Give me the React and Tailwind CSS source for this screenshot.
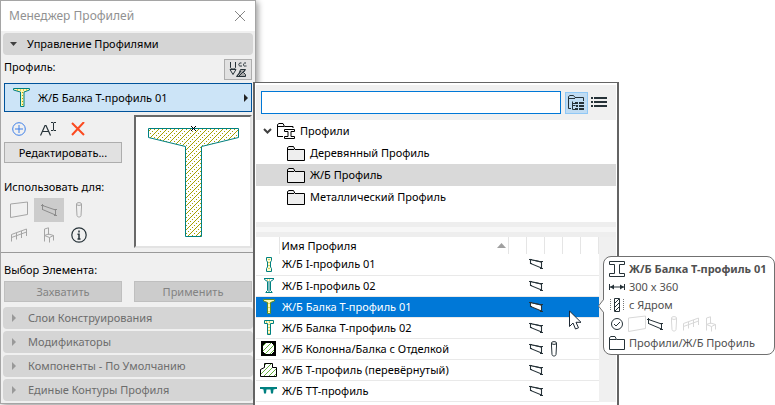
import React from "react";

const Icon = ({ w, h, className = "", children, ...rest }) => (
  <svg
    width={w}
    height={h}
    viewBox={`0 0 ${w} ${h}`}
    fill="none"
    stroke="currentColor"
    aria-hidden="true"
    className={`shrink-0 ${className}`}
    {...rest}
  >
    {children}
  </svg>
);

const Wall = () => (
  <Icon w={18} h={18}>
    <path d="M.5 3 17.5 1v12.5L.5 16.5z" />
  </Icon>
);

const Beam = ({ fill = "none" }) => (
  <Icon w={16} h={14}>
    <path d="M1.500 2.500 14.500 7v5L1.500 6.500z" fill={fill} />
    <path d="M0 2.500h3M1.500 1v6M13 6.500h3M13 12.500h3M14.500 6v7" />
  </Icon>
);

const SmallBeam = ({ fill = "none" }) => (
  <Icon w={14} h={12} strokeWidth="1.100">
    <path d="M1.500 1.500 12.500 4v6L1.500 5.500z" fill={fill} />
    <path d="M0 1.500h3M11 3.500h3M11 10.500h3M1 5.500h2M2 1.500l10 2.500" />
  </Icon>
);

const Column = () => (
  <Icon w={6} h={16}>
    <ellipse cx="3" cy="2" rx="2.500" ry="1.400" />
    <path d="M.5 2v3l.5 8.500c0 2 4 2 4 0L5.500 5V2" />
  </Icon>
);

const Railing = () => (
  <Icon w={16} h={14}>
    <path d="M.5 13.500V6.500L15.500 1v7M.5 9.500l15-5.500M5.500 11.500V5M10.500 10V3" />
  </Icon>
);

const Chair = () => (
  <Icon w={12} h={16}>
    <path d="M1.500 14.500V2L5.500.8v7M1.500 8.500l4-1.500 5 1.500-4 2zM6.500 10.500v5M10.500 8.500v5" />
  </Icon>
);

const Folder = ({ fill = "#eeeeee" }) => (
  <Icon w={18} h={15}>
    <path d="M.5 14.500V1.500L2 .5h4.500L8 3.500h9.500v11z" fill={fill} />
    <path d="M.5 3.500H7" />
  </Icon>
);

const RootFolder = () => (
  <Icon w={18} h={16}>
    <path d="M6 13.500H.5V1.500L2 .5h4L7.500 3.500h8.500V5M.5 3.500H7" />
    <path d="M7.500 6.500h10v2h-3.500v5h3.500v2h-10v-2H11v-5H7.500z" fill="#fff" />
  </Icon>
);

const TreeFolder = () => (
  <Icon w={17} h={16}>
    <path d="M3 13.500H.5V1.500L2 .5h3.500L7 2.500h8.500V6M.5 3.500H7" />
    <path d="M4.500 6.500v8M4.500 10.500h3M4.500 14.500h3M4.500 8.500h3" />
    <path d="M7 8h3M11 8h5M8 11h2M11 11h5M7 14h3M11 14h5" strokeWidth="2" />
  </Icon>
);

const ListIcon = () => (
  <Icon w={16} h={11} strokeWidth="2">
    <path d="M0 1h2M3 1h13M0 5h2M3 5h13M0 9h2M3 9h13" />
  </Icon>
);

const HatchDefs = () => (
  <svg width="0" height="0" className="absolute" aria-hidden="true">
    <defs>
      <pattern id="hatch" width="8" height="8" patternUnits="userSpaceOnUse">
        <path
          d="M0 7h1v1H0zM1 6h1v1H1zM2 5h1v1H2zM3 4h1v1H3zM4 3h1v1H4zM5 2h1v1H5zM6 1h1v1H6zM7 0h1v1H7z"
          fill="#a5a000"
          shapeRendering="crispEdges"
        />
        <path
          d="M4 7h1v1H4zM6 5h1v1H6zM0 3h1v1H0zM2 1h1v1H2z"
          fill="#a5a000"
          shapeRendering="crispEdges"
        />
      </pattern>
      <pattern id="green" width="5" height="5" patternUnits="userSpaceOnUse">
        <path d="M-1 6 6-1" stroke="#65b13e" strokeWidth="1" />
      </pattern>
    </defs>
  </svg>
);

const shapes = {
  i1: (
    <g stroke="#008080">
      <path d="M7.500 1.500h5v3l-1 1.500v5l1 1.500v3h-5v-3l1-1.500V6l-1-1.500z" fill="#fffbd0" />
      <path d="M10 3v12" stroke="#a5a000" strokeDasharray="1 2" />
    </g>
  ),
  i2: (
    <g stroke="#008080">
      <path d="M5 1.500h10M7 15.500h6M5.500 1.500v1l3 2v9l-2 2M14.500 1.500v1l-3 2v9l2 2" />
      <path d="M10 4v11" />
      <path d="M8 3h4" stroke="#d0b800" strokeDasharray="1 1" />
    </g>
  ),
  t1: (
    <g stroke="#5f8d25">
      <path d="M4.500 1.500h11V3l-4 1.500v11h-3v-11l-4-1.500z" fill="#fff9b8" />
      <path d="M10 5v10" stroke="#d0b800" strokeDasharray="1 3" />
    </g>
  ),
  t2: (
    <g stroke="#008080">
      <path d="M5.500 1.500h9v3h-3v11h-3v-11h-3z" fill="#fffbd0" />
      <path d="M7 3h6M10 5v10" stroke="#a5a000" strokeDasharray="1 2" />
    </g>
  ),
  col: (
    <g>
      <path d="M3 2h13v13H3z" fill="#fff" stroke="#000" strokeWidth="2" />
      <path d="M4 3h11v11H4z" fill="url(#green)" stroke="none" />
      <path d="M4 3h2v1H5v1H4zM13 3h2v2h-1V4h-1zM4 12h1v1h1v1H4zM14 12h1v2h-2v-1h1z" fill="#000" stroke="none" />
    </g>
  ),
  inv: (
    <path
      d="M5.500 2.500h8v4h4v9h-16v-7l4-2z"
      fill="url(#green)"
      stroke="#000"
    />
  ),
  tt: (
    <path
      d="M1 5h17v2h-1.500l-2 .5-.5 4h-2l-.5-4H7.500l-.5 4H5l-.5-4L3 7H1z"
      fill="#008080"
      stroke="none"
    />
  ),
};

const Shape = ({ kind }) => (
  <Icon w={19} h={17}>
    {shapes[kind]}
  </Icon>
);

const rows = [
  { name: "Ж/Б I-профиль 01", shape: "i1" },
  { name: "Ж/Б I-профиль 02", shape: "i2" },
  { name: "Ж/Б Балка Т-профиль 01", shape: "t1", selected: true },
  { name: "Ж/Б Балка Т-профиль 02", shape: "t2" },
  { name: "Ж/Б Колонна/Балка с Отделкой", shape: "col", column: true },
  { name: "Ж/Б Т-профиль (перевёрнутый)", shape: "inv" },
  { name: "Ж/Б ТТ-профиль", shape: "tt" },
];

const folders = ["Деревянный Профиль", "Ж/Б Профиль", "Металлический Профиль"];

const sections = [
  "Слои Конструирования",
  "Модификаторы",
  "Компоненты - По Умолчанию",
  "Единые Контуры Профиля",
];

function Preview() {
  return (
    <div className="flex flex-1 items-start border-2 border-t-[#696969] border-l-[#696969] border-r-[#e3e3e3] border-b-[#e3e3e3] bg-white pt-[7px] pl-3">
      <Icon w={91} h={114}>
        <path
          d="M.5 4.500h90v9l-37 9v90h-16v-90l-37-9z"
          fill="url(#hatch)"
          stroke="#008080"
        />
        <path d="m43 2 5 5m0-5-5 5" stroke="#000" />
      </Icon>
    </div>
  );
}

function Palette() {
  return (
    <section className="w-64 shrink-0 self-start border border-[#a5a5a5] bg-[#f0f0f0] shadow-[2px_2px_6px_rgba(0,0,0,0.4)]">
      <header className="flex h-[30px] items-center justify-between bg-white pr-2.5 pl-2">
        <h1 className="text-[12px] text-[#919191]">Менеджер Профилей</h1>
        <button aria-label="Закрыть" className="text-[#858585]">
          <Icon w={10} h={10} className="block">
            <path d="m0 0 10 10M10 0 0 10" />
          </Icon>
        </button>
      </header>

      <div className="px-0.5 pt-0.5">
        <button className="flex h-[22px] w-full items-center gap-2.5 rounded bg-[#d5d5d5] pl-[7px]">
          <Icon w={7} h={4} stroke="none" className="text-[#404040]">
            <path d="M0 0h7L3.500 4z" fill="currentColor" />
          </Icon>
          Управление Профилями
        </button>
      </div>

      <div className="px-[3px]">
        <div className="flex h-7 items-center justify-between">
          <span className="pb-1">Профиль:</span>
          <button
            aria-label="Атрибуты профиля"
            className="flex h-[21px] w-7 items-center justify-center border border-[#adadad] bg-[#e1e1e1] text-[#263238]"
          >
            <Icon w={18} h={17}>
              <path d="M1.500 1v5.500c0 2 5 2 5 0V1M1 8.500h6l-3 5z" />
              <path d="M12.500 2C9 1 9 6 12 5h1M17 2c-3-1-3.500 4-.5 3h1" />
              <path d="M7.500 15.500h9v-2l-2-2 2-3h-5l-1.500 4z" fill="#aaa" />
              <path d="m10 15 6-6M8 15l4-5" />
            </Icon>
          </button>
        </div>

        <button className="flex h-[29px] w-full items-center border border-[#00539b] bg-[#cce4f7] pr-[3px] pl-2">
          <Icon w={18} h={21} stroke="#008080">
            <path d="M.5 1.500h16v1.500l-5.500 2v14.500H7.500V5L.5 3z" fill="#fff7b0" />
            <path d="M4 3h10M9.500 5v14" stroke="#b5a800" strokeDasharray="1 2" />
          </Icon>
          <span className="ml-[7px] flex-1 text-left">Ж/Б Балка Т-профиль 01</span>
          <Icon w={4} h={8} stroke="none">
            <path d="M0 0l4 4-4 4z" fill="#222" />
          </Icon>
        </button>

        <div className="flex gap-3 pt-[3px] pb-1">
          <div className="w-[118px]">
            <div className="flex h-[27px] items-center gap-3.5 pl-2">
              <button aria-label="Создать" className="text-[#3d7fe8]">
                <Icon w={14} h={14} className="block">
                  <circle cx="7" cy="7" r="6.300" />
                  <path d="M7 3v8M3 7h8" />
                </Icon>
              </button>
              <button aria-label="Переименовать" className="text-[#263238]">
                <Icon w={17} h={14} className="block">
                  <path d="M.5 13.500 5 3.500h1L10.500 13.500M2.500 9.500h6" strokeWidth="1.200" />
                  <path d="M11 .5h2l.5.5.5-.5h2M11 8.500h2l.5-.5.5.5h2M13.500 1v7" />
                </Icon>
              </button>
              <button aria-label="Удалить" className="text-[#fb4a20]">
                <Icon w={14} h={14} strokeWidth="2" className="block">
                  <path d="m1 1 12 12M13 0 1 13" />
                </Icon>
              </button>
            </div>
            <button className="h-[21px] w-full border border-[#adadad] bg-[#e1e1e1]">
              Редактировать...
            </button>
            <p className="mt-4 mb-[3px]">Использовать для:</p>
            <div className="grid w-[90px] grid-cols-3 text-[#a5a5a5]">
              <button aria-label="Стена" className="flex h-6 items-center justify-center">
                <Wall />
              </button>
              <button
                aria-label="Балка"
                className="flex h-6 items-center justify-center bg-[#cccccc] text-[#8c8c8c]"
              >
                <Beam />
              </button>
              <button aria-label="Колонна" className="flex h-6 items-center justify-center">
                <Column />
              </button>
              <button aria-label="Ограждение" className="flex h-[26px] items-center justify-center">
                <Railing />
              </button>
              <button aria-label="Объект" className="flex h-[26px] items-center justify-center">
                <Chair />
              </button>
              <button
                aria-label="Информация"
                className="flex h-[26px] items-center justify-center text-[#263238]"
              >
                <Icon w={16} h={16}>
                  <circle cx="8" cy="8" r="7.200" strokeWidth="1.200" />
                  <path d="M8 3.500v2M6.500 7.200h1.500V12M6.500 12h3" strokeWidth="1.500" />
                </Icon>
              </button>
            </div>
          </div>
          <Preview />
        </div>
      </div>

      <div className="border-t border-[#9a9a9a] px-[3px] pt-[9px]">
        <p>Выбор Элемента:</p>
        <div className="mt-[3px] grid grid-cols-2 gap-3 text-[#838383]">
          <button className="h-[21px] border border-[#bfbfbf] bg-[#cccccc]">Захватить</button>
          <button className="h-[21px] border border-[#bfbfbf] bg-[#cccccc]">Применить</button>
        </div>
      </div>

      <div className="flex flex-col gap-0.5 px-0.5 pt-[5px] pb-0.5">
        {sections.map((s) => (
          <button
            key={s}
            className="flex h-[22px] items-center gap-3 rounded bg-[#d5d5d5] pl-[9px] text-[#6d6d6d]"
          >
            <Icon w={4} h={8} stroke="none" className="text-[#999]">
              <path d="M0 0l4 4-4 4z" fill="currentColor" />
            </Icon>
            {s}
          </button>
        ))}
      </div>
    </section>
  );
}

function Tooltip() {
  return (
    <aside
      role="tooltip"
      className="absolute top-[173px] left-full -ml-[14px] w-[172px] rounded-lg border border-[#707070] bg-white py-px pl-[5px] whitespace-nowrap text-[#505050]"
    >
      <Icon w={6} h={14} stroke="#707070" className="absolute top-[42px] -left-1.5">
        <path d="M6 0 .5 7 6 14" fill="#fff" />
      </Icon>
      <div className="flex h-[21px] items-center gap-1 font-bold">
        <Icon w={16} h={16} stroke="#263238">
          <path d="M.5 .5h15v3H10.500v9h5v3H.5v-3h5v-9h-5z" />
        </Icon>
        Ж/Б Балка Т-профиль 01
      </div>
      <div className="flex h-4 items-center gap-1">
        <Icon w={16} h={8} stroke="#263238">
          <path d="M.5 1v6M15.500 1v6M1 4h14" />
          <path d="m1 4 4-2.500v5zM15 4l-4-2.500v5z" fill="#263238" stroke="none" />
        </Icon>
        300 x 360
      </div>
      <div className="flex h-[19px] items-center gap-1">
        <Icon w={16} h={14} stroke="#263238">
          <path d="M1.500 1v12M14.500 1v12" strokeDasharray="1 1" stroke="#777" />
          <path d="M5.500.5h5v13h-5zM6 5l4-4M6 9l4-4M6 13l4-4" />
        </Icon>
        с Ядром
      </div>
      <div className="flex h-[19px] items-center text-[#d8d8d8]">
        <Icon w={14} h={14} stroke="#263238" className="mx-px">
          <circle cx="7" cy="7" r="5.500" />
          <path d="m4 7 2 2 4-4" />
        </Icon>
        <span className="ml-[3px] flex items-center gap-px">
          <Wall />
          <span className="text-[#263238]">
            <Beam />
          </span>
        </span>
        <span className="ml-2 flex items-center gap-1.5">
          <Column />
          <Railing />
          <Chair />
        </span>
      </div>
      <div className="flex h-5 items-center gap-1">
        <Icon w={16} h={14} stroke="#263238">
          <path d="M.5 13.500v-12L2 .5h4L7.500 3.500h8v10zM.5 3.500H7" />
        </Icon>
        Профили/Ж/Б Профиль
      </div>
    </aside>
  );
}

function Chooser() {
  return (
    <section className="relative z-10 mt-[82px] -ml-[3px] min-w-0 flex-1 border-x-2 border-t border-[#646464] bg-white px-px pt-0.5">
      <div className="flex h-[35px] items-center bg-[#f0f0f0] px-[5px] text-[#263238]">
        <input
          aria-label="Поиск профиля"
          autoComplete="off"
          className="h-[23px] min-w-0 flex-1 border border-[#0078d7] bg-white px-1 outline-none"
        />
        <button
          aria-label="Показать папки"
          className="ml-1 flex h-[22px] w-[23px] items-center justify-center border border-[#90c8f6] bg-[#c0dcf3]"
        >
          <TreeFolder />
        </button>
        <button aria-label="Показать списком" className="mr-1 ml-[3px]">
          <ListIcon />
        </button>
      </div>

      <ul className="pb-3.5">
        <li className="flex h-[22px] items-center pl-[7px]">
          <Icon w={9} h={6} strokeWidth="2" className="text-[#404040]">
            <path d="m1 1 3.500 3.500L8 1" />
          </Icon>
          <span className="ml-[5px] flex items-center gap-[5px]">
            <RootFolder />
            Профили
          </span>
        </li>
        {folders.map((f, i) => (
          <li
            key={f}
            className={`flex h-[22px] items-center gap-[5px] pl-[31px] ${i === 1 ? "bg-[#d9d9d9]" : ""}`}
          >
            <Folder />
            {f}
          </li>
        ))}
      </ul>

      <div className="h-[15px] border-y-[5px] border-[#eeeeee] bg-[#f7f7f7]" />

      <div className="bg-[#f0f0f0] pr-[17px]">
        <table className="w-full table-fixed border-collapse bg-white">
          <colgroup>
            <col className="w-[23px]" />
            <col />
            <col className="w-[18px]" />
            <col className="w-[18px]" />
            <col className="w-[18px]" />
            <col className="w-[18px]" />
            <col className="w-[18px]" />
          </colgroup>
          <thead>
            <tr className="h-[17px]">
              <th className="border-r border-[#e5e5e5] p-0" />
              <th className="border-r border-[#e5e5e5] p-0 pl-0.5 font-normal">
                <span className="flex items-center justify-between pr-0.5">
                  Имя Профиля
                  <Icon w={9} h={5} stroke="none">
                    <path d="M0 5h9L4.500 0z" fill="#a0a0a0" />
                  </Icon>
                </span>
              </th>
              {[0, 1, 2, 3, 4].map((n) => (
                <th key={n} className="border-r border-[#e5e5e5] p-0" />
              ))}
            </tr>
          </thead>
          <tbody>
            {rows.map((r) => (
              <tr
                key={r.name}
                className={`h-[21px] border-b border-[#e9e9e9] ${r.selected ? "bg-[#0078d7] text-white" : ""}`}
              >
                <td className="p-0 pl-[3px]">
                  <Shape kind={r.shape} />
                </td>
                <td className="p-0 pl-[3px] whitespace-nowrap">{r.name}</td>
                <td />
                <td className="p-0 pl-0.5 text-[#263238]">
                  <SmallBeam fill={r.selected ? "#fff" : "none"} />
                </td>
                <td className="p-0 pl-1.5 text-[#263238]">{r.column && <Column />}</td>
                <td />
                <td />
              </tr>
            ))}
          </tbody>
        </table>
      </div>

      <Icon w={13} h={20} className="absolute top-[227px] right-[35px]">
        <path
          d="M.5 1v15.500l3.500-3.500 2.500 6 3-1.200-2.500-5.500h5z"
          fill="#fff"
          stroke="#1d2733"
        />
      </Icon>
      <Tooltip />
    </section>
  );
}

export default function App() {
  return (
    <main className="flex min-h-screen overflow-hidden bg-white pr-[156px] font-['Noto_Sans','Open_Sans',sans-serif] text-[11px] leading-4 text-black">
      <HatchDefs />
      <Palette />
      <Chooser />
    </main>
  );
}
